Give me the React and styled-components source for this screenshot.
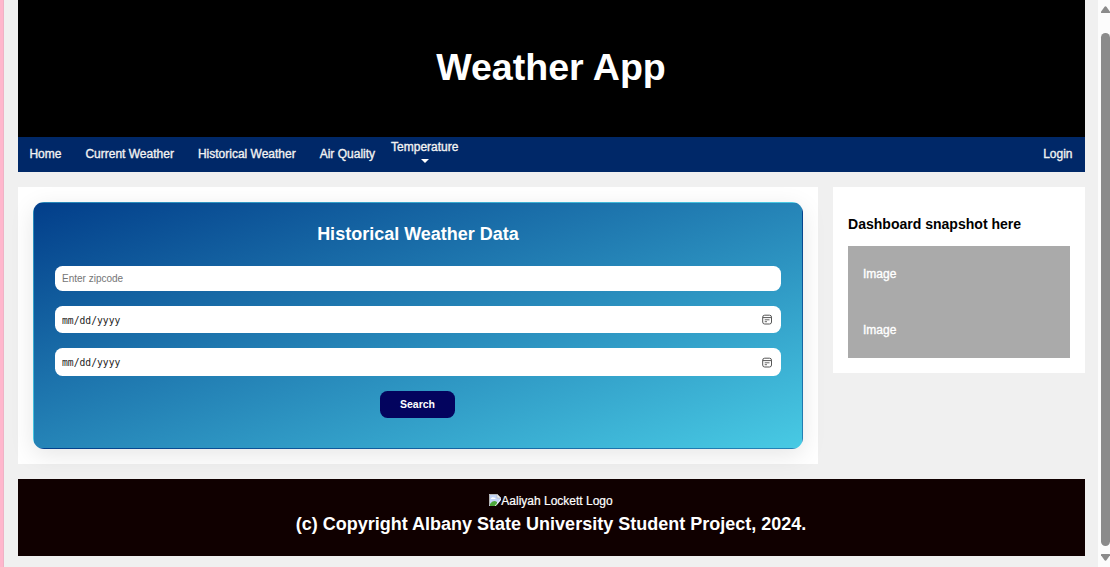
import React from "react";
import styled, { createGlobalStyle } from "styled-components";

const GlobalStyle = createGlobalStyle`
  * { box-sizing: border-box; }
  html, body { margin: 0; overflow: hidden; }
  body { background: #f0f0f0; font-family: "Liberation Sans", Arial, sans-serif; font-size: 12px; }
  h1, h2, h3, p { margin: 0; }
`;

const Window = styled.div`
  display: flex;
  height: 567px;
`;

const Edge = styled.div`
  width: 4px;
  background: #ffb6cc;
  border-right: 1px solid #efb2c6;
`;

const Page = styled.div`
  flex: 1;
  padding: 0 13px 0 14px;
`;

const Header = styled.header`
  height: 137px;
  padding: 0 1px 4px 0;
  display: flex;
  align-items: center;
  justify-content: center;
  background: #000;
  color: #fff;
`;

const AppTitle = styled.h1`
  font-size: 37.6px;
  line-height: 44px;
`;

const Nav = styled.nav`
  display: flex;
  height: 35px;
  padding-right: 0.5px;
  background: #002868;
`;

const NavLink = styled.a`
  display: flex;
  flex-direction: column;
  align-items: center;
  padding: ${(p) => (p.$menu ? "4px 4px 0" : "11px 12px 0")};
  margin-left: ${(p) => (p.$end ? "auto" : 0)};
  color: #f2f2f2;
  line-height: 13px;
  white-space: nowrap;
  -webkit-text-stroke: 0.35px #f2f2f2;

  &:first-child { padding-left: 11.4px; }
`;

const Caret = styled.span`
  margin-top: 5px;
  border: 4px solid transparent;
  border-top-color: #fff;
  border-bottom: 0;
`;

const Columns = styled.div`
  display: flex;
  align-items: flex-start;
  gap: 15px;
  padding: 15px 0;
`;

const Main = styled.main`
  flex: 1;
  height: 277px;
  padding: 15px;
  background: #fff;
`;

const Form = styled.form`
  display: flex;
  flex-direction: column;
  align-items: center;
  height: 247px;
  padding: 21px 21px 19px;
  border: 1px solid transparent;
  border-radius: 11px;
  background: linear-gradient(to bottom right, #023e8a, #48cae4);
  box-shadow: 0 6px 24px rgba(0, 0, 0, 0.1);
`;

const FormTitle = styled.h2`
  color: #fff;
  font-size: 18px;
  line-height: 21px;
  margin-bottom: 21px;
`;

const Field = styled.label`
  display: flex;
  align-items: center;
  width: 100%;
  height: ${(p) => p.$height}px;
  margin-bottom: 15px;
  padding: 0 8px 0 7px;
  border-radius: 7.5px;
  background: #fff;
`;

const Input = styled.input`
  flex: 1;
  padding: ${(p) => (p.$mono ? "1px 0 0" : 0)};
  border: 0;
  outline: 0;
  background: transparent;
  font: ${(p) => (p.$mono ? '9.7px "DejaVu Sans Mono", monospace' : '10px "Liberation Sans", sans-serif')};
  &::placeholder { color: ${(p) => (p.$mono ? "#222" : "#757575")}; }
`;

const SearchButton = styled.button`
  width: 75px;
  height: 27px;
  margin-right: 1px;
  padding: 0 0 1px;
  border: 0;
  border-radius: 7.5px;
  background: #03045e;
  color: #fff;
  font: bold 10.5px "Liberation Sans", sans-serif;
`;

const Aside = styled.aside`
  width: 252px;
  height: 186px;
  padding: 29px 15px 15px;
  background: #fff;
`;

const AsideTitle = styled.h3`
  color: #000;
  font-size: 14.04px;
  line-height: 16px;
  margin-bottom: 14px;
`;

const ImageSlot = styled.div`
  height: 56px;
  padding: 21px 15px 0;
  background: #aaa;
  color: #fff;
  line-height: 14px;
  -webkit-text-stroke: 0.35px #fff;
`;

const Footer = styled.footer`
  position: relative;
  height: 77px;
  padding: 15px 1px 0 0;
  background: #100000;
  color: #fff;
  text-align: center;
`;

const Logo = styled.div`
  display: flex;
  justify-content: center;
  height: 14px;
  line-height: 14px;
  -webkit-text-stroke: 0.2px #fff;
`;

const Copyright = styled.p`
  margin-top: 6px;
  font-size: 18px;
  font-weight: bold;
  line-height: 21px;
`;

const Scrollbar = styled.div`
  display: flex;
  flex-direction: column;
  width: 12px;
  padding: 6px 0 6px 3px;
  background: #fcfcfc;
`;

const Thumb = styled.div`
  flex: 1;
  margin: 20px 0 8px;
  border-radius: 5px;
  background: #8b8b8b;
`;

const Arrow = ({ down }) => (
  <svg width="9" height="7" viewBox="0 0 9 7">
    <path
      d={down ? "M0 .5Q0 0 .5 0H8.5Q9 0 9 .5V1.2L5.6 6Q4.5 7.5 3.4 6L0 1.2Z" : "M0 6.5Q0 7 .5 7H8.5Q9 7 9 6.5V5.8L5.6 1Q4.5-.5 3.4 1L0 5.8Z"}
      fill="#8b8b8b"
    />
  </svg>
);

const CalendarIcon = () => (
  <svg width="11" height="11" viewBox="0 0 11 11" fill="none" stroke="#555">
    <rect x="0.7" y="1.2" width="8.8" height="8.8" rx="2" />
    <path d="M.7 3.6H9.5" />
    <path d="M2.7 5.8H7.5M2.7 7.7H5" strokeWidth=".9" />
  </svg>
);

const BrokenImage = () => (
  <svg width="12" height="12" viewBox="0 0 12 12">
    <path d="M0 0H8L12 4V12H0Z" fill="#c3d4f7" />
    <path d="M.5 11.5V.5H8" fill="none" stroke="#b4b4b4" />
    <path d="M2 4.5Q3 2.5 5 3.5Q7 3.5 6.5 5H2Z" fill="#fff" />
    <path d="M1 12V10Q4 5.5 8 8V12Z" fill="#4ba83a" />
    <path d="M12 6L7.5 11.5V12H12Z" fill="#100000" />
    <path d="M12 5L6 12" stroke="#fff" strokeWidth=".8" />
    <path d="M8 0V4H12Z" fill="#eee" stroke="#aaa" strokeWidth=".5" />
  </svg>
);

const DateField = ({ height }) => (
  <Field $height={height}>
    <Input $mono placeholder="mm/dd/yyyy" />
    <CalendarIcon />
  </Field>
);

export default function App() {
  return (
    <>
      <GlobalStyle />
      <Window>
        <Edge />
        <Page>
          <Header>
            <AppTitle>Weather App</AppTitle>
          </Header>
          <Nav>
            <NavLink>Home</NavLink>
            <NavLink>Current Weather</NavLink>
            <NavLink>Historical Weather</NavLink>
            <NavLink>Air Quality</NavLink>
            <NavLink $menu>
              Temperature
              <Caret />
            </NavLink>
            <NavLink $end>Login</NavLink>
          </Nav>
          <Columns>
            <Main>
              <Form>
                <FormTitle>Historical Weather Data</FormTitle>
                <Field $height={25}>
                  <Input placeholder="Enter zipcode" />
                </Field>
                <DateField height={27} />
                <DateField height={28} />
                <SearchButton type="button">Search</SearchButton>
              </Form>
            </Main>
            <Aside>
              <AsideTitle>Dashboard snapshot here</AsideTitle>
              <ImageSlot>Image</ImageSlot>
              <ImageSlot>Image</ImageSlot>
            </Aside>
          </Columns>
          <Footer>
            <Logo>
              <BrokenImage />
              Aaliyah Lockett Logo
            </Logo>
            <Copyright>(c) Copyright Albany State University Student Project, 2024.</Copyright>
          </Footer>
        </Page>
        <Scrollbar>
          <Arrow />
          <Thumb />
          <Arrow down />
        </Scrollbar>
      </Window>
    </>
  );
}
